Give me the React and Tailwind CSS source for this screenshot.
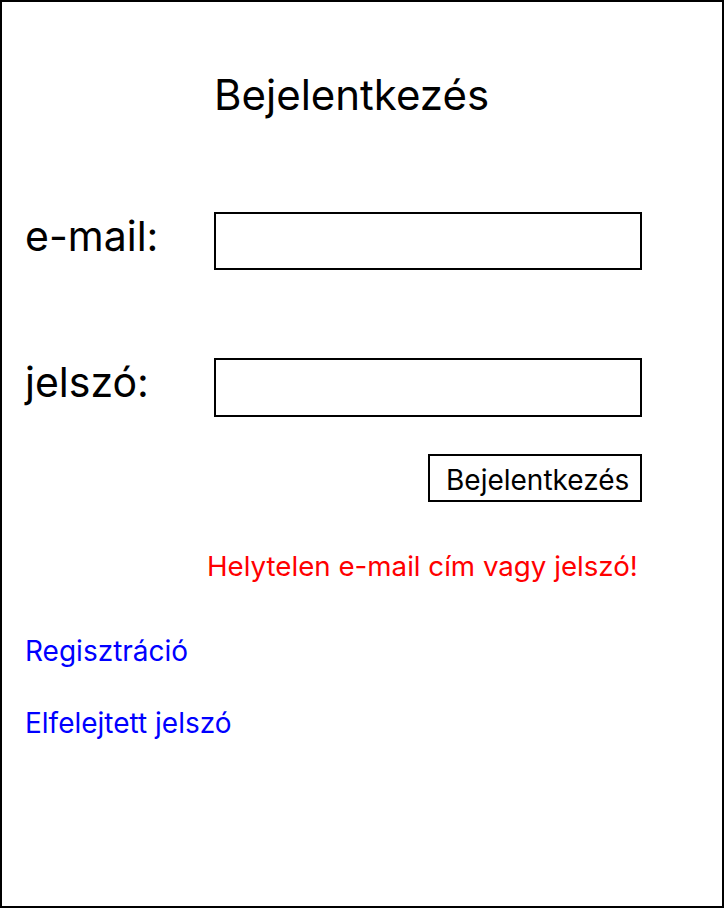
import React from 'react';

const App = () => {
  return (
    <div className="w-[724px] h-[908px] border-2 border-black bg-white text-black font-['Inter',sans-serif]">
      <h1 className="pt-[67px] pl-[212px] text-[42px] leading-[51px] font-normal">Bejelentkezés</h1>

      <div className="mt-[92px] pl-[23px] flex items-start">
        <label className="w-[189px] text-[41px] leading-[48px]">e-mail:</label>
        <input type="text" className="w-[428px] h-[58px] border-2 border-black" />
      </div>

      <div className="mt-[88px] pl-[23px] flex items-start">
        <label className="w-[189px] text-[41px] leading-[48px]">jelszó:</label>
        <input type="password" className="w-[428px] h-[59px] border-2 border-black" />
      </div>

      <div className="mt-[37px] pl-[426px] flex">
        <button type="button" className="w-[214px] h-[48px] border-2 border-black pl-[16px] pt-[7px] flex items-start text-left text-[28px] leading-[34px]">
          Bejelentkezés
        </button>
      </div>

      <p className="mt-[47px] pl-[205px] text-[27.7px] leading-[34px] text-[#ff0000]">Helytelen e-mail cím vagy jelszó!</p>

      <div className="mt-[51px] pl-[23px] flex flex-col gap-[38px] items-start text-[28px] leading-[34px] text-[#0000ff]">
        <a href="#">Regisztráció</a>
        <a href="#">Elfelejtett jelszó</a>
      </div>
    </div>
  );
};

export default App;
